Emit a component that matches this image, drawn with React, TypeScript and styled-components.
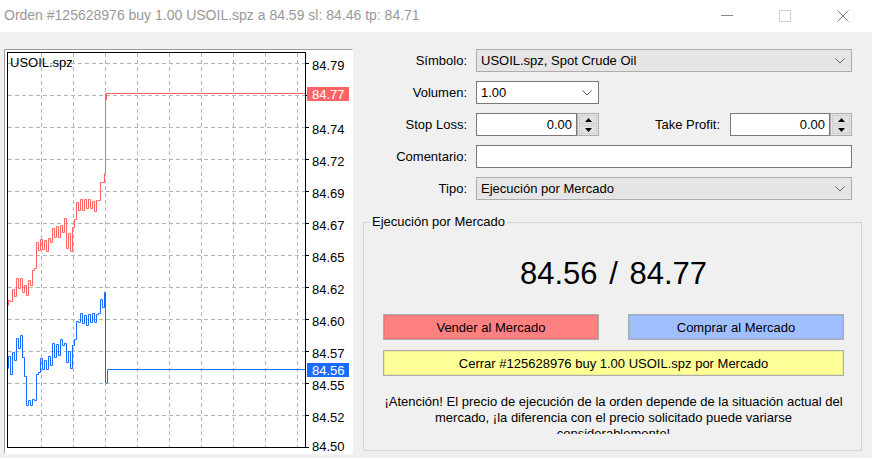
import styled, { createGlobalStyle } from 'styled-components';

const GlobalStyle = createGlobalStyle`
  html, body {
    margin: 0;
    padding: 0;
    background: #f0f0f0;
    font-family: "Liberation Sans", Arial, sans-serif;
    font-size: 13px;
    color: #000;
  }
`

const Window = styled.div`
  width: 872px;
  height: 458px;
  display: flex;
  flex-direction: column;
  overflow: hidden;
  background: #f0f0f0;
`

const TitleBar = styled.div`
  height: 32px;
  flex: none;
  display: flex;
  align-items: center;
  justify-content: space-between;
  background: #fff;
`

const Title = styled.div`
  padding: 0 0 2px 4px;
  font-size: 14px;
  color: #999;
  white-space: nowrap;
`

const Captions = styled.div`
  display: flex;
  height: 100%;
`

const CaptionButton = styled.div`
  width: 58px;
  height: 100%;
  display: flex;
  align-items: center;
  justify-content: center;
`

const Body = styled.div`
  flex: 1;
  display: flex;
  gap: 10px;
  padding: 17px 0 0 4px;
`

const ChartPanel = styled.div`
  width: 349px;
  height: 405px;
  box-sizing: border-box;
  border: 1px solid;
  border-color: #a0a0a0 #fff #fff #a0a0a0;
  background: #fff;
  svg { display: block; }
`

const OrderPanel = styled.div`
  width: 499px;
  display: flex;
  flex-direction: column;
`

const Form = styled.div`
  display: grid;
  grid-template-columns: 104px 376px;
  grid-auto-rows: 23px;
  column-gap: 9px;
  row-gap: 9px;
`

const FieldLabel = styled.div`
  text-align: right;
  line-height: 23px;
  white-space: nowrap;
`

const Combo = styled.div<{ $flat?: boolean; $width?: number }>`
  width: ${p => (p.$width ? `${p.$width}px` : '100%')};
  height: 23px;
  box-sizing: border-box;
  display: flex;
  align-items: center;
  justify-content: space-between;
  padding: 0 6px 0 4px;
  border: 1px solid ${p => (p.$flat ? '#adadad' : '#7a7a7a')};
  background: ${p => (p.$flat ? '#e5e5e5' : '#fff')};
  white-space: nowrap;
`

const StopRow = styled.div`
  display: flex;
  align-items: stretch;
`

const TakeLabel = styled(FieldLabel)`
  flex: 1;
  padding-right: 10px;
`

const NumberField = styled.div<{ $width: number }>`
  width: ${p => p.$width}px;
  display: flex;
`

const NumberInput = styled.div`
  flex: 1;
  box-sizing: border-box;
  border: 1px solid #7a7a7a;
  background: #fff;
  text-align: right;
  padding-right: 4px;
  line-height: 21px;
`

const SpinBox = styled.div`
  width: 22px;
  box-sizing: border-box;
  border: 1px solid #adadad;
  background: #e5e5e5;
  display: flex;
  flex-direction: column;
  padding: 1px;
  gap: 1px;
`

const SpinHalf = styled.div`
  flex: 1;
  display: flex;
  align-items: center;
  justify-content: center;
  border: 1px solid #cfcfcf;
  background: #e1e1e1;
`

const Group = styled.fieldset`
  margin: 14px 0 0 0;
  padding: 0;
  min-width: 0;
  height: 237px;
  box-sizing: border-box;
  border: 1px solid #d5d5d5;
`

const Legend = styled.legend`
  margin-left: 6px;
  padding: 0 2px;
  line-height: 16px;
`

const GroupBody = styled.div`
  padding: 26px 17px 0 19px;
  display: flex;
  flex-direction: column;
`

const Quote = styled.div`
  font-size: 31px;
  line-height: 36px;
  text-align: center;
  word-spacing: 3px;
`

const ButtonRow = styled.div`
  margin-top: 22px;
  display: flex;
  gap: 29px;
`

const tones = {
  sell: '#ff8080',
  buy: '#a0bfff',
  close: '#ffff99',
}

const TradeButton = styled.div<{ $tone: keyof typeof tones }>`
  flex: 1;
  height: 26px;
  box-sizing: border-box;
  display: flex;
  align-items: center;
  justify-content: center;
  border: 1px solid #adadad;
  box-shadow: inset 0 0 0 1px rgba(0, 0, 0, 0.07);
  background: ${p => tones[p.$tone]};
`

const CloseButton = styled(TradeButton)`
  flex: none;
  margin-top: 10px;
`

const Warning = styled.div`
  margin-top: 18px;
  height: 40px;
  overflow: hidden;
  line-height: 16px;
  text-align: center;
`

type Key = [number, number, number];

const redKeys: Key[] = [
  [8, 298, 305], [12, 287, 305], [16, 277, 292], [21, 277, 288], [24, 285, 305],
  [28, 277, 290], [33, 265, 282], [36, 238, 255], [48, 238, 251], [52, 225, 238],
  [60, 225, 237], [63, 212, 230], [66, 225, 250], [71, 238, 252], [73, 212, 225],
  [77, 198, 212], [96, 198, 211], [98, 188, 205], [101, 178, 186], [104, 172, 180],
];

const blueKeys: Key[] = [
  [8, 355, 368], [11, 352, 383], [14, 343, 362], [18, 333, 350], [21, 330, 352],
  [23, 350, 368], [25, 397, 408], [33, 398, 408], [36, 370, 395], [38, 358, 372],
  [49, 355, 369], [52, 343, 358], [58, 343, 356], [62, 330, 345], [66, 350, 365],
  [71, 352, 372], [74, 327, 340], [78, 312, 326], [96, 312, 326], [99, 298, 312],
  [103, 290, 305],
];

const rnd = (n: number) => {
  const s = Math.sin(n * 12.9898) * 43758.5453;
  return s - Math.floor(s);
};

const bandAt = (keys: Key[], x: number): [number, number] => {
  for (let i = 0; i < keys.length - 1; i++) {
    const [xa, ta, ba] = keys[i];
    const [xb, tb, bb] = keys[i + 1];
    if (x >= xa && x <= xb) {
      const k = (x - xa) / (xb - xa);
      return [ta + (tb - ta) * k, ba + (bb - ba) * k];
    }
  }
  const last = keys[keys.length - 1];
  return [last[1], last[2]];
};

const ticks = (keys: Key[], seed: number) => {
  const x0 = keys[0][0];
  const x1 = keys[keys.length - 1][0];
  let d = `M${x0 + 0.5} ${keys[0][2] + 0.5}`;
  let up = true;
  for (let x = x0; x <= x1 + 1; x += 2) {
    const [t, b] = bandAt(keys, x);
    const r = rnd(x + seed);
    const y = up ? t + r * (b - t) * 0.3 : b - r * (b - t) * 0.3;
    d += ` H${x + 0.5} V${Math.round(y) + 0.5}`;
    up = !up;
  }
  return d;
};

const askPath = ticks(redKeys, 3) + ' H105.5 V93.5 H106.5 V100 V93.5 H305';
const bidPath = ticks(blueKeys, 11) + ' H105.5 V383 H107.5 V369.5 H305';

const levels = ['84.79', '84.77', '84.74', '84.72', '84.69', '84.67', '84.65', '84.62', '84.60', '84.57', '84.55', '84.52', '84.50'];
const columns = [41, 73, 105, 137, 169, 201, 233, 265, 297];

const PriceChart = () => (
  <svg width="347" height="403" viewBox="5 50 347 403" fontFamily='"Liberation Sans", Arial, sans-serif' fontSize="13">
    <defs>
      <clipPath id="plot">
        <rect x="8" y="53" width="297" height="395" />
      </clipPath>
    </defs>
    <g stroke="#b4b4b4" strokeDasharray="4 3" strokeWidth="1" fill="none">
      {columns.map(x => (
        <path key={`v${x}`} d={`M${x + 0.5} 53 V447`} />
      ))}
      {levels.slice(0, 12).map((_, i) => (
        <path key={`h${i}`} d={`M8 ${63.5 + i * 32} H305`} />
      ))}
    </g>
    <g clipPath="url(#plot)" fill="none" strokeWidth="1">
      <path d={askPath} stroke="#ff6464" />
      <path d={bidPath} stroke="#1a6cff" />
    </g>
    <rect x="7.5" y="52.5" width="298" height="395" fill="none" stroke="#000" />
    <g stroke="#000">
      {levels.map((_, i) => (
        <path key={`t${i}`} d={`M305 ${63.5 + i * 32} H309`} />
      ))}
    </g>
    {levels.map((v, i) =>
      i === 1 ? null : (
        <text key={v} x="312" y={Math.min(63.5 + i * 32 + 6.5, 451)} fill="#000">{v}</text>
      )
    )}
    <rect x="307" y="87" width="42" height="14" fill="#ff6464" />
    <text x="312" y="98.5" fill="#fff">84.77</text>
    <rect x="307" y="363" width="42" height="14" fill="#1a6cff" />
    <text x="312" y="374.5" fill="#fff">84.56</text>
    <text x="10" y="67" fill="#000">USOIL.spz</text>
  </svg>
);

const Chevron = () => (
  <svg width="10" height="6" viewBox="0 0 10 6">
    <path d="M0.5 0.5 L5 5 L9.5 0.5" fill="none" stroke="#606060" strokeWidth="1" />
  </svg>
);

const Arrow = ({ down }: { down?: boolean }) => (
  <svg width="7" height="4" viewBox="0 0 7 4">
    <path d={down ? 'M0 0 H7 L3.5 4 Z' : 'M0 4 H7 L3.5 0 Z'} fill="#000" />
  </svg>
);

const Spinner = () => (
  <SpinBox>
    <SpinHalf><Arrow /></SpinHalf>
    <SpinHalf><Arrow down /></SpinHalf>
  </SpinBox>
);

const App = () => {
  return (
    <>
      <GlobalStyle />
      <Window>
        <TitleBar>
          <Title>Orden #125628976 buy 1.00 USOIL.spz a 84.59 sl: 84.46 tp: 84.71</Title>
          <Captions>
            <CaptionButton>
              <svg width="12" height="2" viewBox="0 0 12 2"><line x1="0" y1="0.5" x2="12" y2="0.5" stroke="#888" /></svg>
            </CaptionButton>
            <CaptionButton>
              <svg width="12" height="12" viewBox="0 0 12 12"><rect x="0.5" y="0.5" width="11" height="11" fill="none" stroke="#d0d0d0" /></svg>
            </CaptionButton>
            <CaptionButton>
              <svg width="12" height="12" viewBox="0 0 12 12"><path d="M0.5 0.5 L11.5 11.5 M11.5 0.5 L0.5 11.5" stroke="#808080" fill="none" /></svg>
            </CaptionButton>
          </Captions>
        </TitleBar>
        <Body>
          <ChartPanel>
            <PriceChart />
          </ChartPanel>
          <OrderPanel>
            <Form>
              <FieldLabel>Símbolo:</FieldLabel>
              <Combo $flat>USOIL.spz, Spot Crude Oil<Chevron /></Combo>
              <FieldLabel>Volumen:</FieldLabel>
              <Combo $width={123}>1.00<Chevron /></Combo>
              <FieldLabel>Stop Loss:</FieldLabel>
              <StopRow>
                <NumberField $width={123}>
                  <NumberInput>0.00</NumberInput>
                  <Spinner />
                </NumberField>
                <TakeLabel>Take Profit:</TakeLabel>
                <NumberField $width={122}>
                  <NumberInput>0.00</NumberInput>
                  <Spinner />
                </NumberField>
              </StopRow>
              <FieldLabel>Comentario:</FieldLabel>
              <Combo />
              <FieldLabel>Tipo:</FieldLabel>
              <Combo $flat>Ejecución por Mercado<Chevron /></Combo>
            </Form>
            <Group>
              <Legend>Ejecución por Mercado</Legend>
              <GroupBody>
                <Quote>84.56 / 84.77</Quote>
                <ButtonRow>
                  <TradeButton $tone="sell">Vender al Mercado</TradeButton>
                  <TradeButton $tone="buy">Comprar al Mercado</TradeButton>
                </ButtonRow>
                <CloseButton $tone="close">Cerrar #125628976 buy 1.00 USOIL.spz por Mercado</CloseButton>
                <Warning>
                  ¡Atención! El precio de ejecución de la orden depende de la situación actual del mercado, ¡la diferencia con el precio solicitado puede variarse considerablemente!
                </Warning>
              </GroupBody>
            </Group>
          </OrderPanel>
        </Body>
      </Window>
    </>
  );
};

export default App;
